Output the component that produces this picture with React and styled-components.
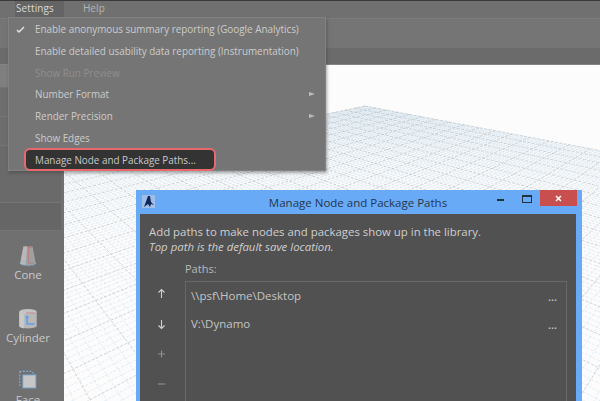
import React from "react";
import styled, { createGlobalStyle } from "styled-components";

const GlobalStyle = createGlobalStyle`
  html, body {
    margin: 0;
    padding: 0;
    background: #fff;
  }
`;

const Page = styled.div`
  position: relative;
  width: 600px;
  height: 401px;
  overflow: hidden;
  display: flex;
  flex-direction: column;
  font-family: "Open Sans", "Liberation Sans", sans-serif;
`;

const MenuBar = styled.div`
  height: 17px;
  flex: none;
  display: flex;
  padding-left: 15px;
  gap: 19px;
  border-top: 1px solid #3a3a3a;
  background: #707070;
`;

const MenuTitle = styled.div`
  height: 16px;
  padding: ${(props) => (props.$open ? "0 10px 0 1px" : "0")};
  font-size: 10px;
  line-height: 15px;
  letter-spacing: 0.1px;
  color: ${(props) => (props.$open ? "#d8d8d8" : "#b4b4b4")};
  background: ${(props) => (props.$open ? "#646464" : "transparent")};
`;

const Toolbar = styled.div`
  height: 29px;
  flex: none;
  border-top: 1px solid #7b7b7b;
  background: #757575;
`;

const Strip = styled.div`
  height: 16px;
  flex: none;
  border-bottom: 1px solid #858585;
  background: #6b6b6b;
`;

const Body = styled.div`
  flex: 1;
  display: flex;
  min-height: 0;
`;

const Sidebar = styled.div`
  width: 64px;
  flex: none;
  display: flex;
  flex-direction: column;
  background: #707070;
`;

const Category = styled.div`
  width: 61px;
  flex: none;
  height: ${(props) => props.$h}px;
  box-sizing: border-box;
  border-bottom: 1px solid #747474;
  background: ${(props) => props.$bg};
`;

const Tool = styled.div`
  height: 62.5px;
  flex: none;
  display: flex;
  flex-direction: column;
  align-items: center;
  padding: 14px 8px 0 0;
  box-sizing: border-box;
  font-size: 11.5px;
  line-height: 15px;
  color: #c9c9c9;
`;

const ToolIcon = styled.svg`
  width: 22px;
  height: 22px;
  flex: none;
`;

const Viewport = styled.div`
  flex: 1;
  min-width: 0;
  background: #fcfcfc;
`;

const GridSvg = styled.svg`
  display: block;
  width: 536px;
  height: 336px;
`;

const DropMenu = styled.div`
  position: absolute;
  left: 8px;
  top: 17px;
  width: 318px;
  height: 154px;
  box-sizing: border-box;
  padding-top: 1px;
  background: #757575;
  border: 1px solid #828282;
  box-shadow: 1px 2px 3px rgba(60, 60, 60, 0.45);
`;

const MenuRow = styled.div`
  position: relative;
  height: 21.8px;
  padding-left: 26px;
  font-size: 9.9px;
  line-height: 21px;
  white-space: nowrap;
  color: ${(props) => (props.$disabled ? "#8f8f8f" : "#cccccc")};
`;

const Check = styled.svg`
  position: absolute;
  left: 7px;
  top: 7px;
  width: 9px;
  height: 7px;
`;

const SubArrow = styled.span`
  position: absolute;
  right: 10px;
  top: 8px;
  width: 0;
  height: 0;
  border-left: 6px solid #bdbdbd;
  border-top: 2.5px solid transparent;
  border-bottom: 2.5px solid transparent;
`;

const Highlight = styled.div`
  position: absolute;
  left: 15px;
  top: 130px;
  width: 192px;
  height: 23px;
  box-sizing: border-box;
  padding-left: 9px;
  border: 2px solid #e8696d;
  border-radius: 6px;
  background: #333333;
  font-size: 9.9px;
  line-height: 20px;
  white-space: nowrap;
  color: #c8c8c8;
`;

const Dialog = styled.div`
  position: absolute;
  left: 136px;
  top: 190px;
  width: 446px;
  height: 240px;
  box-sizing: border-box;
  padding: 0 6px 0 4px;
  display: flex;
  flex-direction: column;
  background: #69aaf7;
`;

const TitleBar = styled.div`
  position: relative;
  height: 24px;
  flex: none;
  display: flex;
  align-items: center;
  justify-content: center;
  font-size: 11.5px;
  color: #26364a;
`;

const AppIcon = styled.svg`
  position: absolute;
  left: 2px;
  top: 5px;
  width: 13px;
  height: 13px;
`;

const WindowButtons = styled.div`
  position: absolute;
  right: -1px;
  top: 0;
  display: flex;
  align-items: flex-start;
`;

const MinButton = styled.span`
  width: 7px;
  height: 2px;
  margin: 9px 18px 0 0;
  background: #22303f;
`;

const MaxButton = styled.span`
  width: 8px;
  height: 5px;
  margin: 5px 8px 0 0;
  border: 1px solid #22303f;
  border-top-width: 2px;
`;

const CloseButton = styled.span`
  width: 37px;
  height: 16px;
  display: flex;
  align-items: center;
  justify-content: center;
  background: #c94f4f;
`;

const DialogBody = styled.div`
  flex: 1;
  padding: 10px 9px 0 9px;
  background: #515151;
  color: #cfcfcf;
  font-size: 11.4px;
  line-height: 15px;
`;

const Hint = styled.div`
  font-style: ${(props) => (props.$italic ? "italic" : "normal")};
  white-space: nowrap;
`;

const PathsLabel = styled.div`
  margin: 7px 0 4px 36px;
  font-size: 11px;
  line-height: 15.5px;
  color: #b9b9b9;
`;

const PathsArea = styled.div`
  display: flex;
`;

const SideButtons = styled.div`
  width: 36px;
  flex: none;
  display: flex;
  flex-direction: column;
  align-items: center;
  margin-top: -2px;
  padding-right: 12px;
  box-sizing: border-box;
`;

const SideButton = styled.svg`
  width: 11px;
  height: 30px;
  flex: none;
`;

const PathsBox = styled.div`
  flex: 1;
  height: 150px;
  box-sizing: border-box;
  border: 1px solid #686868;
`;

const PathRow = styled.div`
  height: 28px;
  display: flex;
  align-items: center;
  justify-content: space-between;
  padding: 0 9px 0 5px;
  font-size: 11.5px;
  color: #c4c4c4;
`;

const Dots = styled.span`
  font-size: 11px;
  font-weight: 600;
  padding-top: 2px;
  color: #c8c8c8;
`;

// ground plane: two sets of lines running to their vanishing points
const far = [365, 106, 1];
const vpA = [822, 10, 1];
const vpB = [-125, 13, 1];
const scale = 0.0042;
const limit = 1 / scale - 6;

function project(u, v) {
  const w = far[2] - u * scale * vpB[2] - v * scale * vpA[2];
  const x = far[0] - u * scale * vpB[0] - v * scale * vpA[0];
  const y = far[1] - u * scale * vpB[1] - v * scale * vpA[1];
  return `${(x / w).toFixed(1)} ${(y / w).toFixed(1)}`;
}

function gridPath(major) {
  let d = "";
  for (let a = 0; a < limit; a++) {
    if ((a % 5 === 0) !== major) continue;
    d += `M${project(a, 0)}L${project(a, limit - a)}`;
    d += `M${project(0, a)}L${project(limit - a, a)}`;
  }
  return d;
}

function Ground() {
  return (
    <GridSvg viewBox="64 65 536 336">
      <path d={gridPath(false)} fill="none" stroke="#d3e3ee" strokeWidth="0.6" strokeDasharray="3 1.5" />
      <path d={gridPath(true)} fill="none" stroke="#aeb8c0" strokeWidth="0.6" strokeDasharray="3 1.5" />
    </GridSvg>
  );
}

function ConeIcon() {
  return (
    <ToolIcon viewBox="0 0 24 24">
      <path d="M7 1.500h10l3.500 19c-3 2.400-14 2.400-17 0z" fill="#a0a0a0" />
      <path d="M7 1.500h4l-1.500 20c-2.500 0-5-.5-6-1z" fill="#b8b8b8" />
      <ellipse cx="12" cy="20" rx="8.500" ry="2.500" fill="none" stroke="#7fb0dc" strokeWidth="0.8" strokeDasharray="2 1" />
      <path d="M12 2.500h5M12.500 2.500v17h6" fill="none" stroke="#c96a6a" strokeWidth="0.7" />
    </ToolIcon>
  );
}

function CylinderIcon() {
  return (
    <ToolIcon viewBox="0 0 24 24">
      <path d="M2.500 4v16c2 3 17 3 19 0V4z" fill="#b8b8b8" />
      <path d="M2.500 4v16c1 1.500 3 2 5 2.300V3z" fill="#c9c9c9" />
      <ellipse cx="12" cy="4" rx="9.500" ry="3" fill="#c4c4c4" />
      <path d="M10 5.500h10" stroke="#c96a6a" strokeWidth="0.8" />
      <path d="M11 9v8.500h8" fill="none" stroke="#5aa0ee" strokeWidth="1.800" />
      <path d="M8.500 10.500l2.500-3 2.500 3z" fill="#5aa0ee" />
    </ToolIcon>
  );
}

function FaceIcon() {
  return (
    <ToolIcon viewBox="0 0 24 24">
      <path d="M3 1.500h13l3.500 4M3 1.500v16" fill="none" stroke="#7fb0dc" strokeWidth="1.200" strokeDasharray="2 1.500" />
      <rect x="6.500" y="5.500" width="14" height="14" fill="#c6c6c6" stroke="#7fb0dc" />
    </ToolIcon>
  );
}

const categories = [
  { h: 23, bg: "#7f7f7f" },
  { h: 29, bg: "#6e6e6e" },
  { h: 29, bg: "#6d6d6d" },
  { h: 57, bg: "#6a6a6a" },
  { h: 28, bg: "#666666" },
];

const tools = [
  { name: "Cone", icon: <ConeIcon /> },
  { name: "Cylinder", icon: <CylinderIcon /> },
  { name: "Face", icon: <FaceIcon /> },
];

const menuItems = [
  { label: "Enable anonymous summary reporting (Google Analytics)", checked: true },
  { label: "Enable detailed usability data reporting (Instrumentation)" },
  { label: "Show Run Preview", disabled: true },
  { label: "Number Format", sub: true },
  { label: "Render Precision", sub: true },
  { label: "Show Edges" },
];

const sideIcons = [
  "M5.500 19v-8M2.500 13.500l3-3 3 3",
  "M5.500 11v8M2.500 16.500l3 3 3-3",
  "M5.500 11.500v7M2 15h7",
  "M2 15h7",
];

const paths = ["\\\\psf\\Home\\Desktop", "V:\\Dynamo"];

export default function App() {
  return (
    <Page>
      <GlobalStyle />
      <MenuBar>
        <MenuTitle $open>Settings</MenuTitle>
        <MenuTitle>Help</MenuTitle>
      </MenuBar>
      <Toolbar />
      <Strip />
      <Body>
        <Sidebar>
          {categories.map((c, i) => (
            <Category key={i} $h={c.h} $bg={c.bg} />
          ))}
          {tools.map((t) => (
            <Tool key={t.name}>
              {t.icon}
              {t.name}
            </Tool>
          ))}
        </Sidebar>
        <Viewport>
          <Ground />
        </Viewport>
      </Body>

      <DropMenu>
        {menuItems.map((item) => (
          <MenuRow key={item.label} $disabled={item.disabled}>
            {item.checked && (
              <Check viewBox="0 0 9 7">
                <path d="M1 4l2 2 5-5" fill="none" stroke="#e6e6e6" strokeWidth="1.400" />
              </Check>
            )}
            {item.label}
            {item.sub && <SubArrow />}
          </MenuRow>
        ))}
        <Highlight>Manage Node and Package Paths...</Highlight>
      </DropMenu>

      <Dialog>
        <TitleBar>
          <AppIcon viewBox="0 0 13 13">
            <rect width="13" height="13" fill="#9fbfe6" />
            <path d="M2 12L6 1h2l1 6 3 3-3-1-1 3-2-3z" fill="#12265e" />
          </AppIcon>
          Manage Node and Package Paths
          <WindowButtons>
            <MinButton />
            <MaxButton />
            <CloseButton>
              <svg width="7" height="7" viewBox="0 0 7 7">
                <path d="M1 1l5 5M6 1L1 6" stroke="#fff" strokeWidth="1.500" />
              </svg>
            </CloseButton>
          </WindowButtons>
        </TitleBar>
        <DialogBody>
          <Hint>Add paths to make nodes and packages show up in the library.</Hint>
          <Hint $italic>Top path is the default save location.</Hint>
          <PathsLabel>Paths:</PathsLabel>
          <PathsArea>
            <SideButtons>
              {sideIcons.map((d, i) => (
                <SideButton key={d} viewBox="0 0 11 30">
                  <path d={d} fill="none" stroke={i < 2 ? "#d0d0d0" : "#909090"} strokeWidth="1.100" />
                </SideButton>
              ))}
            </SideButtons>
            <PathsBox>
              {paths.map((p) => (
                <PathRow key={p}>
                  {p}
                  <Dots>...</Dots>
                </PathRow>
              ))}
            </PathsBox>
          </PathsArea>
        </DialogBody>
      </Dialog>
    </Page>
  );
}
